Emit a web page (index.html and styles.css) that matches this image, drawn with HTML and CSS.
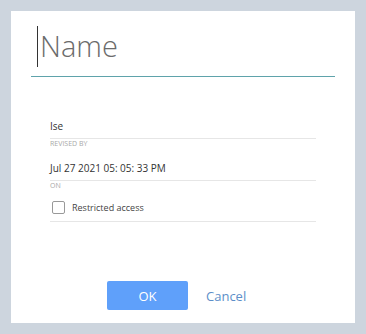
FILE: index.html
```html
<!DOCTYPE html>
<html lang="en">
<head>
  <meta charset="utf-8" />
  <title>Properties</title>
  <link rel="stylesheet" href="styles.css">
</head>
<body>
  <div class="dialog">
    <div class="name-field">
      <span class="caret"></span><span class="name-placeholder">Name</span>
    </div>

    <div class="fields">
      <div class="field">
        <div class="value">Ise</div>
        <div class="label">REVISED BY</div>
      </div>
      <div class="field">
        <div class="value">Jul 27 2021 05: 05: 33 PM</div>
        <div class="label">ON</div>
      </div>
      <label class="check-row">
        <span class="checkbox"></span>
        <span>Restricted access</span>
      </label>
    </div>

    <div class="actions">
      <button class="btn-ok">OK</button>
      <a class="btn-cancel" href="#">Cancel</a>
    </div>
  </div>
</body>
</html>
```

FILE: styles.css
```css
body {
  margin: 0;
  background: #cdd5de;
  font-family: "Open Sans", sans-serif;
  color: #333;
  height: 334px;
  overflow: hidden;
}
.dialog {
  margin: 11px 0 0 11px;
  width: 344px;
  height: 312px;
  background: #fff;
  display: flex;
  flex-direction: column;
}
.name-field {
  margin: 15px 20px 0 20px;
  height: 50px;
  border-bottom: 1px solid #5fa3ab;
  display: flex;
  align-items: flex-start;
  padding-left: 6px;
}
.caret {
  width: 1px;
  height: 41px;
  background: #333;
}
.name-placeholder {
  font-size: 29px;
  font-weight: 300;
  color: #6b6b6b;
  line-height: 40px;
  margin-left: 2px;
}
.fields {
  margin: 42px 39px 0 39px;
}
.field .value {
  font-size: 10px;
  line-height: 14px;
  padding-bottom: 5px;
  border-bottom: 1px solid #e6e6e6;
}
.field .label {
  font-size: 7px;
  color: #a8a8a8;
  line-height: 10px;
  margin-bottom: 12px;
}
.field + .field .label {
  margin-bottom: 8px;
}
.check-row {
  display: flex;
  align-items: center;
  gap: 7px;
  font-size: 9px;
  color: #444;
  padding: 2px 0 7px 2px;
  border-bottom: 1px solid #e6e6e6;
}
.checkbox {
  width: 11px;
  height: 11px;
  border: 1px solid #999;
  border-radius: 2px;
}
.actions {
  margin-top: auto;
  margin-bottom: 13px;
  display: flex;
  align-items: center;
  padding-left: 96px;
  gap: 18px;
}
.btn-ok {
  width: 81px;
  height: 29px;
  border: none;
  border-radius: 2px;
  background: #5fa0fa;
  color: #fff;
  font-family: "Open Sans", sans-serif;
  font-size: 13px;
}
.btn-cancel {
  color: #5d8fc9;
  font-size: 13px;
  text-decoration: none;
}
```
